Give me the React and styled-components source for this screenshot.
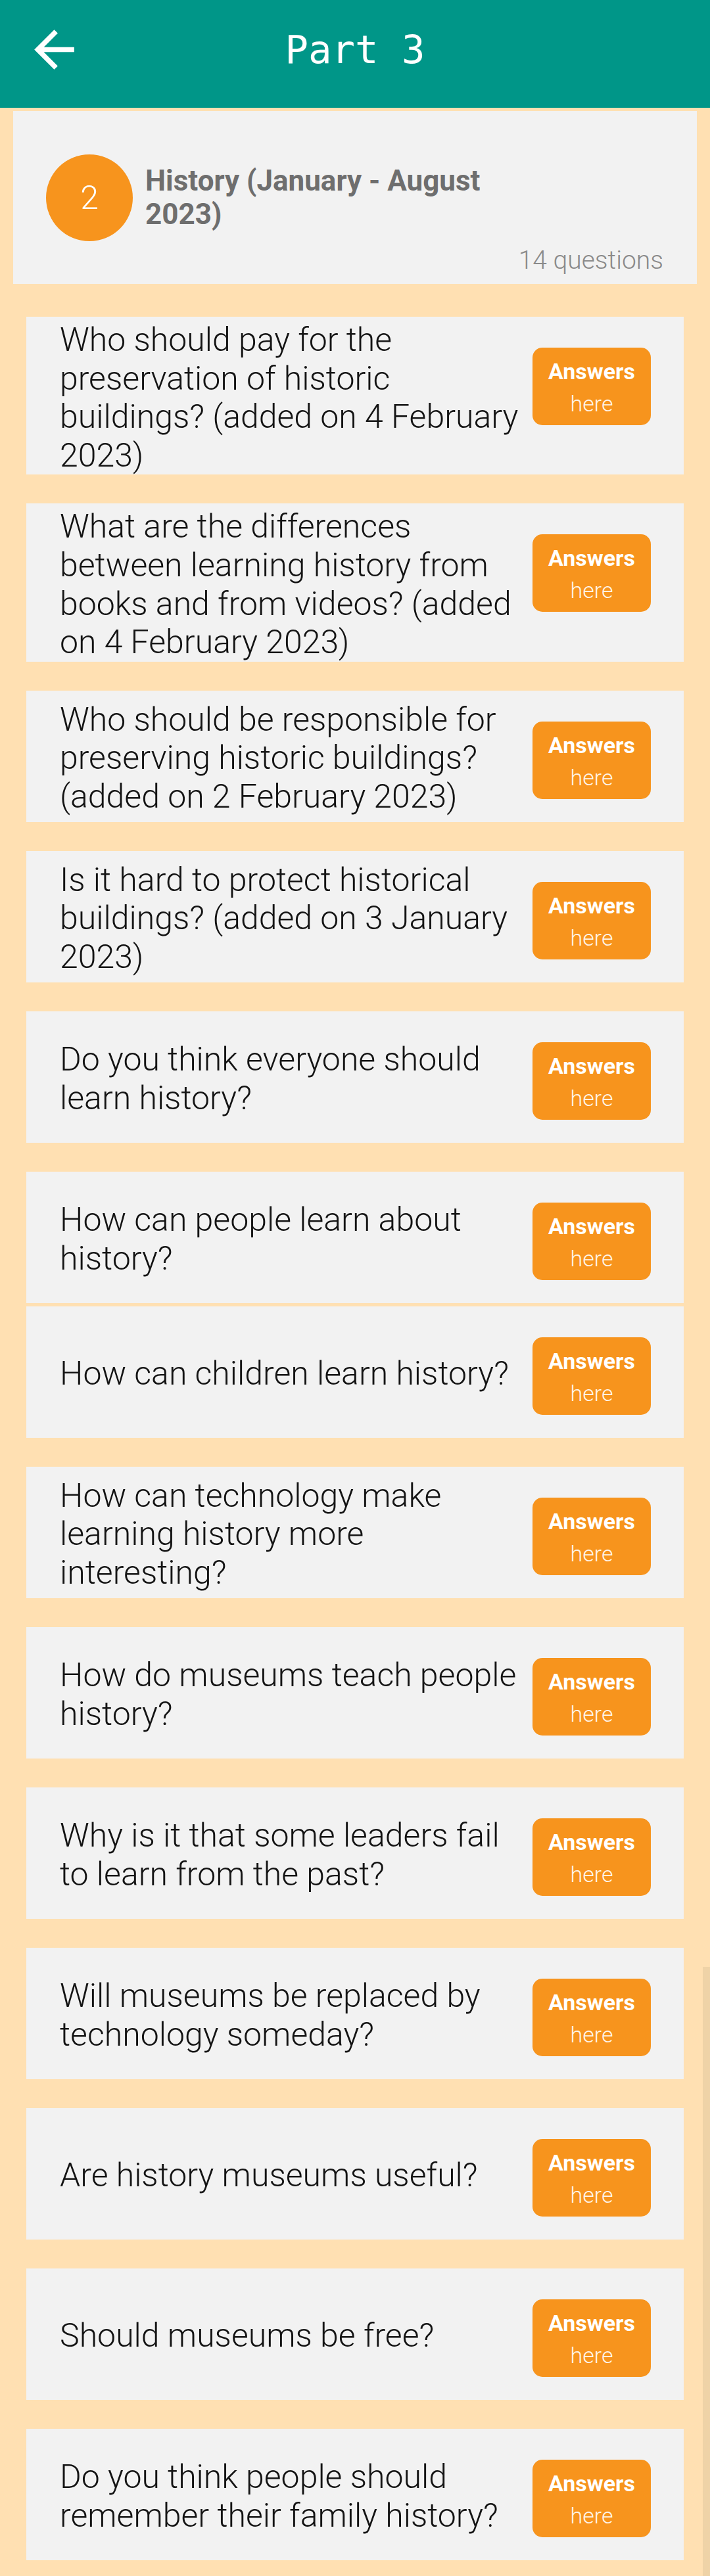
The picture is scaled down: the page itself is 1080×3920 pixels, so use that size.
import React from "react";
import styled, { createGlobalStyle } from "styled-components";

const questions = [
  "Who should pay for the preservation of historic buildings? (added on 4 February 2023)",
  "What are the differences between learning history from books and from videos? (added on 4 February 2023)",
  "Who should be responsible for preserving historic buildings? (added on 2 February 2023)",
  "Is it hard to protect historical buildings? (added on 3 January 2023)",
  "Do you think everyone should learn history?",
  "How can people learn about history?",
  "How can children learn history?",
  "How can technology make learning history more interesting?",
  "How do museums teach people history?",
  "Why is it that some leaders fail to learn from the past?",
  "Will museums be replaced by technology someday?",
  "Are history museums useful?",
  "Should museums be free?",
  "Do you think people should remember their family history?",
];

const App = () => {
  return (
    <>
      <GlobalStyle />
      <StPage>
        <StHeader>
          <StBack aria-label="back">
            <svg width="91" height="91" viewBox="0 0 24 24">
              <path
                fill="#fff"
                d="M20 11H7.83l5.59-5.59L12 4l-8 8 8 8 1.41-1.41L7.83 13H20v-2z"
              />
            </svg>
          </StBack>
          <StTitle>Part 3</StTitle>
        </StHeader>

        <StTopicCard>
          <StTopicRow>
            <StBadge>2</StBadge>
            <StTopicTitle>History (January - August 2023)</StTopicTitle>
          </StTopicRow>
          <StCount>14 questions</StCount>
        </StTopicCard>

        <StList>
          {questions.map((q, i) => (
            <StItem key={i} $tight={i === 6}>
              <StQuestion>{q}</StQuestion>
              <StAnswerButton>
                <strong>Answers</strong>
                <span>here</span>
              </StAnswerButton>
            </StItem>
          ))}
        </StList>

        <StScrollThumb />
      </StPage>
    </>
  );
};

export default App;

const GlobalStyle = createGlobalStyle`
  html, body {
    margin: 0;
    padding: 0;
    background-color: #ffe0b2;
  }
  * {
    box-sizing: border-box;
  }
`;

const StPage = styled.div`
  position: relative;
  width: 1080px;
  height: 3920px;
  overflow: hidden;
  background-color: #ffe0b2;
  font-family: Roboto, "Noto Sans", sans-serif;
`;

const StHeader = styled.header`
  position: relative;
  height: 164px;
  background-color: #009688;
  display: flex;
  align-items: center;
  justify-content: center;
  padding-bottom: 14px;
`;

const StBack = styled.div`
  position: absolute;
  left: 37px;
  top: 30px;
  width: 91px;
  height: 91px;
  display: flex;
`;

const StTitle = styled.h1`
  margin: 0;
  color: #ffffff;
  font-family: "DejaVu Sans Mono", "Liberation Mono", monospace;
  font-weight: 400;
  font-size: 59px;
  white-space: pre;
`;

const StTopicCard = styled.section`
  margin: 5px 20px 0;
  background-color: #f2f2f2;
  padding: 66px 51px 12px 50px;
  display: flex;
  flex-direction: column;
`;

const StTopicRow = styled.div`
  display: flex;
  align-items: center;
  gap: 19px;
`;

const StBadge = styled.div`
  width: 132px;
  height: 132px;
  flex: none;
  border-radius: 50%;
  background-color: #f7941d;
  color: #ffffff;
  font-size: 50px;
  font-weight: 300;
  display: flex;
  align-items: center;
  justify-content: center;
`;

const StTopicTitle = styled.div`
  width: 580px;
  color: #6e6e6e;
  font-weight: 700;
  font-size: 44px;
  line-height: 51px;
`;

const StCount = styled.div`
  align-self: flex-end;
  margin-top: 5px;
  color: #8a8a8a;
  font-weight: 300;
  font-size: 39px;
  line-height: 48px;
`;

const StList = styled.div`
  padding: 50px 40px 0;
  display: flex;
  flex-direction: column;
`;

const StItem = styled.div`
  margin-top: ${(props) => (props.$tight ? "5px" : "44px")};
  &:first-child {
    margin-top: 0;
  }
  min-height: 200px;
  background-color: #f2f2f2;
  padding: 6px 50px 0 51px;
  display: flex;
  align-items: flex-start;
  gap: 16px;
`;

const StQuestion = styled.p`
  flex: 1;
  align-self: center;
  margin: 0;
  color: #141414;
  font-weight: 300;
  font-size: 50px;
  line-height: 58.6px;
`;

const StAnswerButton = styled.button`
  flex: none;
  margin-top: 41px;
  width: 180px;
  height: 118px;
  border: none;
  border-radius: 15px;
  background-color: #f7941d;
  color: #ffffff;
  font-family: Roboto, "Noto Sans", sans-serif;
  display: flex;
  flex-direction: column;
  align-items: center;
  justify-content: center;
  padding: 4px 0 0;

  strong {
    font-weight: 700;
    font-size: 34px;
    line-height: 49px;
  }

  span {
    font-weight: 300;
    font-size: 34px;
    line-height: 49px;
    color: #fff5e8;
  }
`;

const StScrollThumb = styled.div`
  position: absolute;
  right: 0;
  top: 2993px;
  width: 11px;
  bottom: 0;
  background-color: #efd3a7;
`;
